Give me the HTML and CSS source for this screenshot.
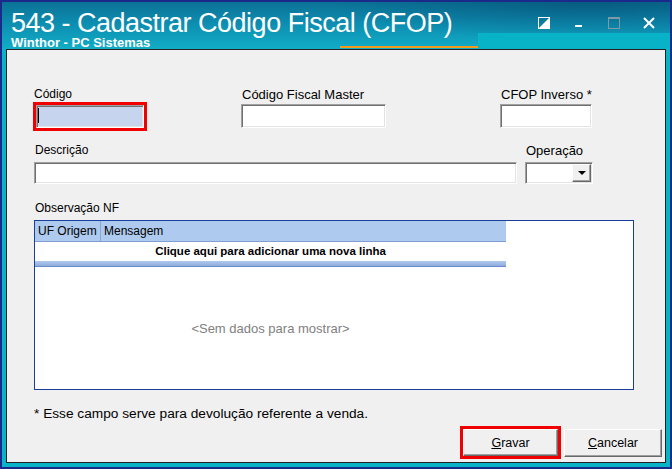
FILE: index.html
```html
<!DOCTYPE html>
<html lang="pt-BR">
<head>
    <meta charset="UTF-8">
    <meta name="viewport" content="width=device-width, initial-scale=1.0">
    <title>543 - Cadastrar Código Fiscal (CFOP)</title>
    <link rel="stylesheet" href="styles.css">
</head>
<body>
    <div class="window">
        <div class="titlebar">
            <div class="title">543 - Cadastrar Código Fiscal (CFOP)</div>
            <div class="subtitle">Winthor - PC Sistemas</div>
            <div class="accent-line"></div>
            <div class="accent-block"></div>
            <div class="controls">
                <svg width="12" height="12" viewBox="0 0 12 12">
                    <rect x="0.5" y="0.5" width="11" height="11" fill="none" stroke="#fff"/>
                    <polygon points="11,1 11,11 1,11" fill="#fff"/>
                </svg>
                <svg width="12" height="12" viewBox="0 0 12 12">
                    <rect x="2" y="8" width="7" height="2" fill="#fff"/>
                </svg>
                <svg width="12" height="12" viewBox="0 0 12 12">
                    <rect x="0.5" y="0.5" width="11" height="11" fill="none" stroke="#7f9aa6"/>
                    <rect x="0" y="0" width="12" height="2" fill="#7f9aa6"/>
                </svg>
                <svg width="12" height="12" viewBox="0 0 12 12">
                    <path d="M1 1 L11 11 M11 1 L1 11" stroke="#fff" stroke-width="2"/>
                </svg>
            </div>
        </div>

        <div class="panel">
            <div class="row">
                <div class="field">
                    <label class="label small">Código</label>
                    <div class="focus-frame">
                        <div class="input active"><span class="caret"></span></div>
                    </div>
                </div>
                <div class="field field-master">
                    <label class="label">Código Fiscal Master</label>
                    <div class="input input-master"></div>
                </div>
                <div class="field field-inverso">
                    <label class="label">CFOP Inverso *</label>
                    <div class="input input-inverso"></div>
                </div>
            </div>

            <div class="row row-second">
                <div class="field field-desc">
                    <label class="label small">Descrição</label>
                    <div class="input input-desc"></div>
                </div>
                <div class="field field-op">
                    <label class="label">Operação</label>
                    <div class="input select">
                        <div class="drop-btn"><span class="arrow"></span></div>
                    </div>
                </div>
            </div>

            <div class="field field-obs">
                <label class="label small">Observação NF</label>
                <div class="grid">
                    <div class="cols">
                        <div class="grid-header">
                            <div class="cell cell-uf">UF Origem</div>
                            <div class="cell">Mensagem</div>
                        </div>
                        <div class="new-row">Clique aqui para adicionar uma nova linha</div>
                        <div class="new-row-bar"></div>
                        <div class="empty">&lt;Sem dados para mostrar&gt;</div>
                    </div>
                </div>
            </div>

            <p class="note">* Esse campo serve para devolução referente a venda.</p>

            <div class="actions">
                <div class="focus-frame btn-frame">
                    <button class="btn"><u>G</u>ravar</button>
                </div>
                <button class="btn btn-cancel"><u>C</u>ancelar</button>
            </div>
        </div>
    </div>
</body>
</html>
```

FILE: styles.css
```css
* {
    box-sizing: border-box;
    font-family: "Liberation Sans", Arial, sans-serif;
}

body {
    margin: 0;
    padding: 0;
}

.window {
    width: 672px;
    height: 469px;
    border: 2px solid #1b2a8a;
    background: #08b3c8;
}

.titlebar {
    position: relative;
    height: 47px;
    padding: 9px 0 0 9px;
    color: #fff;
    background:
        radial-gradient(ellipse 260px 40px at 88% 0%, rgba(0, 45, 85, 0.35), transparent),
        linear-gradient(180deg, #0b7296 0%, #0d8db0 45%, #11adc7 100%);
}

.title {
    font-size: 27px;
    line-height: 25px;
    letter-spacing: -0.5px;
}

.subtitle {
    font-size: 13px;
    font-weight: bold;
    line-height: 13px;
}

.accent-line {
    position: absolute;
    left: 338px;
    top: 44px;
    width: 138px;
    height: 2px;
    background: #f39a1c;
}

.accent-block {
    position: absolute;
    left: 476px;
    top: 31px;
    right: 0;
    height: 16px;
    background: #08b3c8;
}

.controls {
    position: absolute;
    left: 536px;
    top: 15px;
    display: flex;
    gap: 23px;
}

.panel {
    height: 414px;
    margin: 0 4px 4px;
    padding: 37px 3px 0 26px;
    border: 1px solid #222;
    background: #f0f0f0;
}

.row {
    display: flex;
    align-items: flex-start;
}

.field {
    display: flex;
    flex-direction: column;
}

.label {
    padding-left: 1px;
    font-size: 13px;
    line-height: 15px;
    color: #000;
}

.label.small {
    font-size: 12px;
}

.input {
    height: 24px;
    margin-top: 2px;
    background: #fff;
    border: 1px solid;
    border-color: #a0a0a0 #fff #fff #a0a0a0;
    box-shadow: inset 1px 1px 0 #707070, inset -1px -1px 0 #e3e3e3;
}

.focus-frame {
    width: 114px;
    height: 29px;
    border: 3px solid #f00000;
}

.input.active {
    height: 23px;
    margin-top: 0;
    background: #c6d4ed;
}

.caret {
    display: block;
    width: 1px;
    height: 15px;
    margin: 2px 0 0 1px;
    background: #000;
}

.field-master {
    margin-left: 94px;
}

.input-master {
    width: 145px;
}

.field-inverso {
    margin-left: 114px;
}

.input-inverso {
    width: 92px;
}

.row-second {
    margin-top: 12px;
}

.row-second .input {
    height: 22px;
    margin-top: 4px;
}

.field-desc {
    margin-left: 1px;
}

.input-desc {
    width: 483px;
}

.field-op {
    margin-left: 8px;
}

.select {
    width: 68px;
    display: flex;
    justify-content: flex-end;
    padding: 1px 1px 1px 0;
}

.drop-btn {
    width: 19px;
    height: 100%;
    display: flex;
    align-items: center;
    justify-content: center;
    background: #f0f0f0;
    border: 1px solid;
    border-color: #fff #696969 #696969 #fff;
    box-shadow: inset -1px -1px 0 #a0a0a0;
}

.arrow {
    width: 0;
    height: 0;
    border-left: 4px solid transparent;
    border-right: 4px solid transparent;
    border-top: 4px solid #000;
}

.field-obs {
    margin-top: 17px;
    margin-left: 1px;
}

.grid {
    width: 600px;
    height: 170px;
    margin-top: 4px;
    border: 1px solid #1b3d9c;
    background: #fff;
}

.cols {
    width: 471px;
    height: 100%;
    display: flex;
    flex-direction: column;
}

.grid-header {
    display: flex;
    height: 21px;
    background: #aecaee;
    border-bottom: 1px solid #7f9ed4;
}

.cell {
    padding: 1px 0 0 3px;
    font-size: 12px;
    line-height: 19px;
}

.cell-uf {
    width: 66px;
    border-right: 1px solid #8aa5d6;
}

.new-row {
    height: 19px;
    text-align: center;
    font-size: 11.5px;
    font-weight: bold;
    line-height: 19px;
}

.new-row-bar {
    height: 6px;
    background: linear-gradient(180deg, #b0caee, #8eabdc);
    border-bottom: 1px solid #6a8ccb;
}

.empty {
    flex: 1;
    display: flex;
    align-items: center;
    justify-content: center;
    font-size: 13px;
    color: #808080;
}

.note {
    margin: 16px 0 0 1px;
    font-size: 13.7px;
    line-height: 15px;
}

.actions {
    display: flex;
    justify-content: flex-end;
    align-items: center;
    gap: 3px;
    margin-top: 5px;
}

.btn-frame {
    width: 101px;
    height: 33px;
}

.btn {
    width: 100%;
    height: 100%;
    padding: 0;
    font-size: 12.5px;
    color: #000;
    background: #f0f0f0;
    border: 1px solid;
    border-color: #fff #696969 #696969 #fff;
    box-shadow: inset -1px -1px 0 #a0a0a0;
    cursor: pointer;
}

.btn-cancel {
    width: 98px;
    height: 28px;
}
```
